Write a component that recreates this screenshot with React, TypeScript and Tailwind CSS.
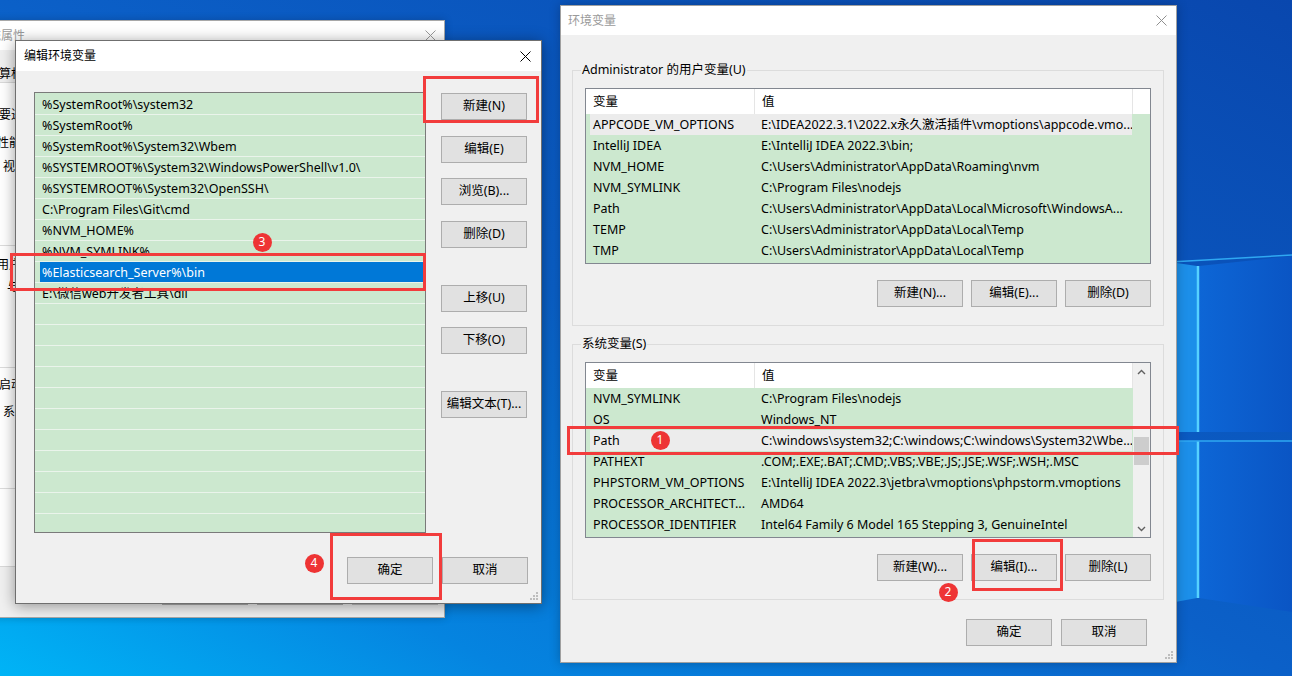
import React from "react";

const FONT = "font-['Noto_Sans','Noto_Sans_CJK_SC',sans-serif]";

function CloseX({ className }: { className?: string }) {
  return (
    <svg width="11" height="11" viewBox="0 0 11 11" className={className}>
      <path d="M0.5 0.5 L10.5 10.5 M10.5 0.5 L0.5 10.5" stroke="currentColor" strokeWidth="1" fill="none" />
    </svg>
  );
}

function Grip() {
  const dots = [
    [8, 2],
    [5, 5],
    [8, 5],
    [2, 8],
    [5, 8],
    [8, 8],
  ];
  return (
    <svg width="10" height="10" viewBox="0 0 10 10">
      {dots.map(([x, y], i) => (
        <rect key={i} x={x - 1} y={y - 1} width="2" height="2" fill="#bdbdbd" />
      ))}
    </svg>
  );
}

function Btn({ children, className = "" }: { children: React.ReactNode; className?: string }) {
  return (
    <div
      className={
        "h-[27px] w-[86px] shrink-0 flex items-center justify-center bg-[#e1e1e1] border border-[#adadad] text-[12.5px] text-black " +
        className
      }
    >
      {children}
    </div>
  );
}

function Wallpaper() {
  return (
    <svg className="absolute inset-0" width="1292" height="676" viewBox="0 0 1292 676">
      <defs>
        <linearGradient id="wp" x1="1" y1="0" x2="0" y2="1">
          <stop offset="0" stopColor="#0947ae" />
          <stop offset="0.5" stopColor="#0b60c8" />
          <stop offset="0.8" stopColor="#0584e0" />
          <stop offset="1" stopColor="#00b4f6" />
        </linearGradient>
        <linearGradient id="pane" x1="0" y1="0" x2="1" y2="0">
          <stop offset="0" stopColor="#0d66d6" />
          <stop offset="1" stopColor="#0a55c4" />
        </linearGradient>
      </defs>
      <rect width="1292" height="676" fill="url(#wp)" />
      {/* logo panes */}
      <polygon points="1199,266 1292,256 1292,432 1199,432" fill="url(#pane)" />
      <polygon points="1199,441 1292,441 1292,612 1199,598" fill="url(#pane)" />
      <polygon points="1170,262 1197,266 1197,432 1170,432" fill="#1c8fe9" />
      <polygon points="1170,441 1197,441 1197,598 1170,603" fill="#1c8fe9" />
      <line x1="1198" y1="266" x2="1198" y2="432" stroke="#56d2ff" strokeWidth="2.5" />
      <line x1="1198" y1="441" x2="1198" y2="598" stroke="#56d2ff" strokeWidth="2.5" />
      <line x1="1170" y1="262" x2="1292" y2="255" stroke="#2fa8f2" strokeWidth="1.5" />
      <line x1="1170" y1="441" x2="1292" y2="441" stroke="#2fa8f2" strokeWidth="1.5" />
    </svg>
  );
}

function SystemPropsWindow() {
  return (
    <div className="absolute left-[-30px] top-[20px] w-[475px] h-[598px] border border-[#a8a8a8] bg-[#f0f0f0] flex flex-col shadow-[0_0_8px_rgba(0,0,0,0.2)]">
      <div className="h-[29px] shrink-0 bg-white flex items-center justify-between pl-[6px] pr-[8px]">
        <span className="text-[12px] text-[#9a9a9a]">系统属性</span>
        <CloseX className="text-[#9a9a9a]" />
      </div>
      <div className="h-[33px] shrink-0 flex items-end pl-[16px] border-b border-[#d9d9d9]">
        <span className="mb-[0px] leading-[16px] text-[12px]">计算机名</span>
      </div>
      <div className="h-[484px] shrink-0 bg-white flex flex-col text-[12px] leading-[16px] border-b border-[#d9d9d9]">
        <span className="mt-[24px] ml-[28px] whitespace-nowrap">要进行大多数更改，你必须作为管理员登录。</span>
        <span className="mt-[12px] ml-[26px]">性能</span>
        <span className="mt-[8px] ml-[32px] whitespace-nowrap">视觉效果，处理器计划，内存使用，以及虚拟内存</span>
        <div className="mt-[70px] h-px bg-[#dcdcdc]" />
        <span className="mt-[11px] ml-[26px]">用户配置文件</span>
        <span className="mt-[6px] ml-[36px] whitespace-nowrap">与登录帐户相关的桌面设置</span>
        <div className="mt-[72px] h-px bg-[#dcdcdc]" />
        <span className="mt-[9px] ml-[28px]">启动和故障恢复</span>
        <span className="mt-[11px] ml-[32px] whitespace-nowrap">系统启动、系统故障和调试信息</span>
        <div className="mt-[68px] h-px bg-[#dcdcdc]" />
      </div>
      <div className="flex gap-[9px] pl-[191px] mt-[11px]">
        <Btn>确定</Btn>
        <Btn>取消</Btn>
        <Btn className="text-[#a0a0a0] bg-[#cccccc] border-[#bfbfbf]">应用(A)</Btn>
      </div>
    </div>
  );
}

const editRows = [
  "%SystemRoot%\\system32",
  "%SystemRoot%",
  "%SystemRoot%\\System32\\Wbem",
  "%SYSTEMROOT%\\System32\\WindowsPowerShell\\v1.0\\",
  "%SYSTEMROOT%\\System32\\OpenSSH\\",
  "C:\\Program Files\\Git\\cmd",
  "%NVM_HOME%",
  "%NVM_SYMLINK%",
  "%Elasticsearch_Server%\\bin",
  "E:\\微信web开发者工具\\dll",
];

function EditDialog() {
  const rows = [...editRows, ...Array.from({ length: 11 }, () => "")];
  return (
    <div className="absolute left-[15px] top-[40px] w-[527px] h-[564px] border border-[#6f6f6f] bg-[#f0f0f0] flex flex-col shadow-[0_2px_14px_rgba(0,0,0,0.4)]">
      <div className="h-[30px] shrink-0 bg-white flex items-center justify-between pl-[8px] pr-[10px]">
        <span className="text-[12px]">编辑环境变量</span>
        <CloseX className="text-black" />
      </div>
      <div className="flex-1 flex flex-col pl-[18px] pr-[13px] pt-[21px]">
        <div className="flex">
          <div className="w-[392px] h-[441px] shrink-0 border border-[#7a7a7a] bg-[#cce8cf] overflow-hidden flex flex-col pt-[1px] text-[12.5px]">
            {rows.map((r, i) => (
              <div key={i} className="h-[21px] shrink-0 border-b border-[#eaf4eb] flex">
                {i === 8 ? (
                  <div className="ml-[5px] mr-[1px] flex-1 bg-[#0078d7] text-white pl-[2px] pt-[2px] flex items-center whitespace-nowrap">
                    {r}
                  </div>
                ) : (
                  <div className="pl-[7px] pt-[2px] flex items-center whitespace-nowrap">{r}</div>
                )}
              </div>
            ))}
          </div>
          <div className="ml-[15px] flex flex-col">
            <Btn className="mt-[1px]">新建(N)</Btn>
            <Btn className="mt-[16px]">编辑(E)</Btn>
            <Btn className="mt-[15px]">浏览(B)...</Btn>
            <Btn className="mt-[16px]">删除(D)</Btn>
            <Btn className="mt-[37px]">上移(U)</Btn>
            <Btn className="mt-[15px]">下移(O)</Btn>
            <Btn className="mt-[37px]">编辑文本(T)...</Btn>
          </div>
        </div>
        <div className="flex justify-end gap-[9px] mt-[24px]">
          <Btn>确定</Btn>
          <Btn>取消</Btn>
        </div>
      </div>
      <div className="absolute right-[2px] bottom-[2px]">
        <Grip />
      </div>
    </div>
  );
}

function ScrollBar() {
  return (
    <div className="w-[17px] shrink-0 bg-[#f0f0f0] flex flex-col">
      <div className="h-[17px] flex items-center justify-center">
        <svg width="9" height="6" viewBox="0 0 9 6">
          <path d="M1 5 L4.5 1.5 L8 5" stroke="#606060" strokeWidth="1.4" fill="none" />
        </svg>
      </div>
      <div className="mt-[57px] mx-[1px] h-[28px] bg-[#cdcdcd]" />
      <div className="mt-auto h-[17px] flex items-center justify-center">
        <svg width="9" height="6" viewBox="0 0 9 6">
          <path d="M1 1 L4.5 4.5 L8 1" stroke="#606060" strokeWidth="1.4" fill="none" />
        </svg>
      </div>
    </div>
  );
}

type Row = [string, string];

function ListView({ rows, selected, scroll }: { rows: Row[]; selected: number; scroll?: boolean }) {
  return (
    <div className="h-[176px] border border-[#828790] bg-[#cce8cf] flex overflow-hidden text-[12.5px]">
      <div className="flex-1 min-w-0 flex flex-col">
        <div className="h-[25px] shrink-0 bg-white flex">
          <div className="w-[169px] shrink-0 border-r border-[#e5e5e5] pl-[7px] pt-[2px] flex items-center">变量</div>
          <div className="w-[378px] shrink-0 border-r border-[#e5e5e5] pl-[7px] pt-[2px] flex items-center">值</div>
          <div className="flex-1" />
        </div>
        {rows.map(([k, v], i) => (
          <div key={k} className="h-[21px] shrink-0 flex pl-[4px]">
            <div className={"w-[542px] pt-[2px] flex items-center " + (i === selected ? "bg-[#ececec]" : "")}>
              <span className="w-[168px] shrink-0 pl-[3px] whitespace-nowrap overflow-hidden">{k}</span>
              <span className="flex-1 min-w-0 pl-[3px] whitespace-nowrap overflow-hidden">{v}</span>
            </div>
          </div>
        ))}
      </div>
      {scroll && <ScrollBar />}
    </div>
  );
}

const userRows: Row[] = [
  ["APPCODE_VM_OPTIONS", "E:\\IDEA2022.3.1\\2022.x永久激活插件\\vmoptions\\appcode.vmo..."],
  ["IntelliJ IDEA", "E:\\IntelliJ IDEA 2022.3\\bin;"],
  ["NVM_HOME", "C:\\Users\\Administrator\\AppData\\Roaming\\nvm"],
  ["NVM_SYMLINK", "C:\\Program Files\\nodejs"],
  ["Path", "C:\\Users\\Administrator\\AppData\\Local\\Microsoft\\WindowsA..."],
  ["TEMP", "C:\\Users\\Administrator\\AppData\\Local\\Temp"],
  ["TMP", "C:\\Users\\Administrator\\AppData\\Local\\Temp"],
];

const sysRows: Row[] = [
  ["NVM_SYMLINK", "C:\\Program Files\\nodejs"],
  ["OS", "Windows_NT"],
  ["Path", "C:\\windows\\system32;C:\\windows;C:\\windows\\System32\\Wbe..."],
  ["PATHEXT", ".COM;.EXE;.BAT;.CMD;.VBS;.VBE;.JS;.JSE;.WSF;.WSH;.MSC"],
  ["PHPSTORM_VM_OPTIONS", "E:\\IntelliJ IDEA 2022.3\\jetbra\\vmoptions\\phpstorm.vmoptions"],
  ["PROCESSOR_ARCHITECT...", "AMD64"],
  ["PROCESSOR_IDENTIFIER", "Intel64 Family 6 Model 165 Stepping 3, GenuineIntel"],
];

function Group({ label, children }: { label: string; children: React.ReactNode }) {
  return (
    <div className="border border-[#dcdcdc] px-[12px] pb-[18px] flex flex-col">
      <div className="-mt-[9px] -ml-[4px] w-fit px-[1px] bg-[#f0f0f0] leading-[16px] whitespace-nowrap text-[12.5px]">
        {label}
      </div>
      <div className="mt-[10px]">{children}</div>
    </div>
  );
}

function EnvWindow() {
  return (
    <div className="absolute left-[560px] top-[5px] w-[617px] h-[658px] border border-[#a0a0a0] bg-[#f0f0f0] flex flex-col shadow-[0_0_10px_rgba(0,0,0,0.25)]">
      <div className="h-[29px] shrink-0 bg-white flex items-center justify-between pl-[7px] pr-[9px]">
        <span className="text-[12px] text-[#9a9a9a]">环境变量</span>
        <CloseX className="text-[#8f8f8f]" />
      </div>
      <div className="flex flex-col ml-[11px] mr-[12px] mt-[35px]">
        <Group label="Administrator 的用户变量(U)">
          <ListView rows={userRows} selected={0} />
          <div className="flex justify-end gap-[8px] mt-[16px]">
            <Btn>新建(N)...</Btn>
            <Btn>编辑(E)...</Btn>
            <Btn>删除(D)</Btn>
          </div>
        </Group>
        <div className="mt-[18px]">
          <Group label="系统变量(S)">
            <ListView rows={sysRows} selected={2} scroll />
            <div className="flex justify-end gap-[8px] mt-[16px]">
              <Btn>新建(W)...</Btn>
              <Btn>编辑(I)...</Btn>
              <Btn>删除(L)</Btn>
            </div>
          </Group>
        </div>
      </div>
      <div className="flex justify-end gap-[9px] mr-[29px] mt-[19px]">
        <Btn>确定</Btn>
        <Btn>取消</Btn>
      </div>
      <div className="absolute right-[2px] bottom-[2px]">
        <Grip />
      </div>
    </div>
  );
}

function Badge({ n, x, y }: { n: number; x: number; y: number }) {
  return (
    <div
      className="absolute w-[19px] h-[19px] rounded-full bg-[#ee3434] text-white text-[12px] leading-none flex items-center justify-center"
      style={{ left: x - 9.5, top: y - 9.5 }}
    >
      {n}
    </div>
  );
}

function Annotations() {
  return (
    <>
      <div className="absolute left-[423px] top-[76px] w-[116px] h-[47px] border-[3px] border-[#f23c3c]" />
      <div className="absolute left-[10px] top-[253px] w-[416px] h-[38px] border-[3px] border-[#f23c3c]" />
      <div className="absolute left-[330px] top-[533px] w-[112px] h-[67px] border-[3px] border-[#f23c3c]" />
      <div className="absolute left-[567px] top-[426px] w-[612px] h-[29px] border-[3px] border-[#f23c3c]" />
      <div className="absolute left-[972px] top-[539px] w-[91px] h-[52px] border-[3px] border-[#f23c3c]" />
      <Badge n={1} x={660} y={440} />
      <Badge n={2} x={948} y={592} />
      <Badge n={3} x={262} y={242} />
      <Badge n={4} x={314} y={563} />
    </>
  );
}

export default function App() {
  return (
    <div className={"relative w-[1292px] h-[676px] overflow-hidden text-[12px] text-black " + FONT}>
      <Wallpaper />
      <SystemPropsWindow />
      <EnvWindow />
      <EditDialog />
      <Annotations />
    </div>
  );
}
